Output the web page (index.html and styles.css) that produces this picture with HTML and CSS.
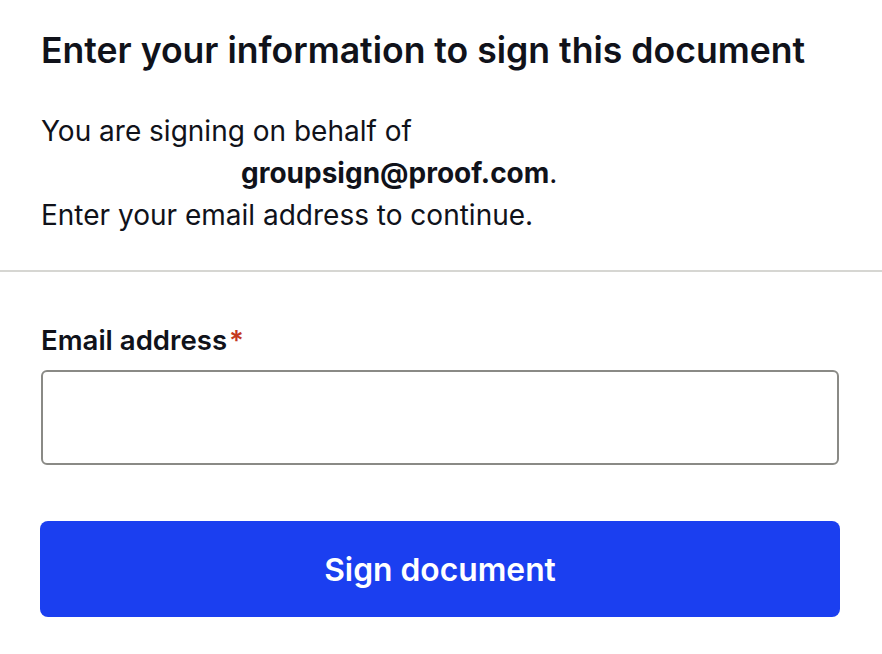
FILE: index.html
```html
<!DOCTYPE html>
<html lang="en">
<head>
<meta charset="utf-8">
<title>Sign document</title>
<link rel="stylesheet" href="styles.css">
</head>
<body>
<main class="panel">
  <section class="intro">
    <h1 class="title">Enter your information to sign this document</h1>
    <p class="desc">You are signing on behalf of<br><span class="org"><strong>groupsign@proof.com</strong>.</span><br>Enter your email address to continue.</p>
  </section>
  <hr class="divider">
  <form class="form">
    <label class="label" for="email">Email address<span class="req">*</span></label>
    <input class="input" id="email" type="email">
    <button class="btn" type="button">Sign document</button>
  </form>
</main>
</body>
</html>
```

FILE: styles.css
```css
* { box-sizing: border-box; }
html, body { margin: 0; padding: 0; background: #fff; }
body {
  font-family: Inter, "Noto Sans", "Liberation Sans", sans-serif;
  color: #10121a;
}
.panel { width: 882px; }
.intro { padding: 29px 41px 0 41px; }
.title {
  margin: 0;
  font-size: 35.6px;
  font-weight: 600;
  line-height: 44px;
}
.desc {
  margin: 37px 0 0 0;
  font-size: 28px;
  line-height: 42px;
}
.org { padding-left: 200px; }
.org strong { font-weight: 700; }
.divider {
  margin: 34px 0 0 0;
  border: 0;
  border-top: 2px solid #d6d6d2;
}
.form {
  padding: 51px 42px 0 40px;
  display: flex;
  flex-direction: column;
}
.label {
  font-size: 27.6px;
  font-weight: 600;
  line-height: 34px;
  margin-bottom: 13px;
  margin-left: 1px;
}
.req { color: #c43a1f; margin-left: 2px; }
.input {
  height: 95px;
  border: 2px solid #8a8a86;
  border-radius: 6px;
  background: #fff;
  margin-left: 1px;
  margin-right: 1px;
}
.btn {
  margin-top: 56px;
  height: 96px;
  border: 0;
  border-radius: 8px;
  background: #1b3ff0;
  color: #fff;
  font-family: Inter, "Noto Sans", "Liberation Sans", sans-serif;
  font-size: 31.8px;
  font-weight: 600;
}
```
